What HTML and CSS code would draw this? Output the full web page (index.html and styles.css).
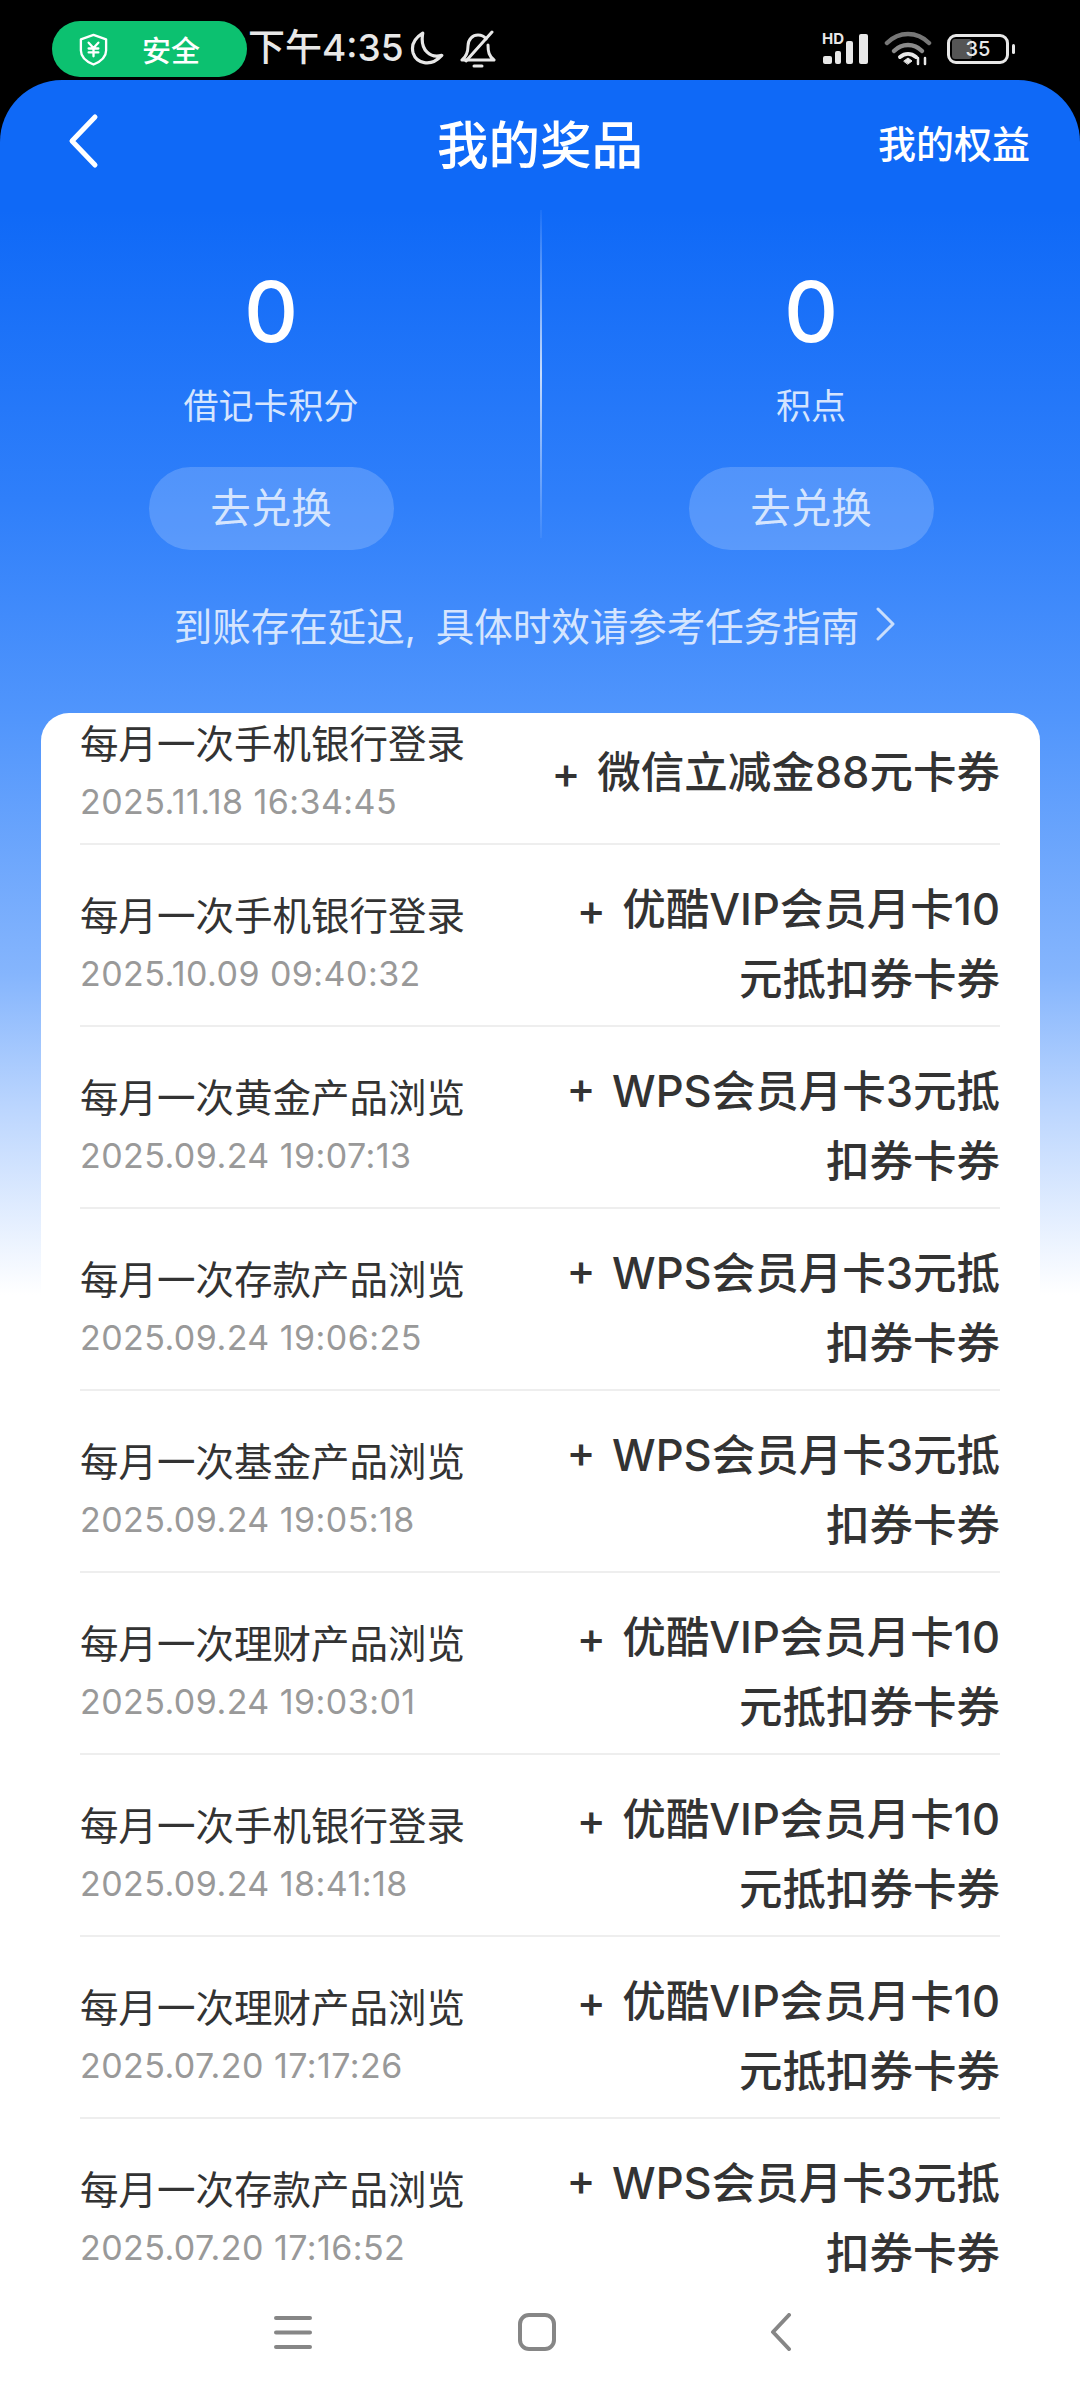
FILE: index.html
```html
<!DOCTYPE html>
<html lang="zh-CN">
<head>
    <meta charset="UTF-8">
    <meta name="viewport" content="width=device-width, initial-scale=1.0">
    <title>我的奖品</title>
    <link rel="stylesheet" href="styles.css">
</head>
<body>

    <!-- Status bar -->
    <div class="status-bar">
        <div class="safe-pill">
            <svg class="shield" viewBox="0 0 30 34" width="31" height="33" fill="none" stroke="#fff" stroke-width="2.4" stroke-linejoin="round" stroke-linecap="round">
                <path d="M15 2 L28 6.5 V18 C28 25 21 30 15 32.5 C9 30 2 25 2 18 V6.5 Z"/>
                <path d="M10 10 L15 15.5 L20 10 M15 15.5 V24 M10 16 H20 M10 20 H20"/>
            </svg>
            <span class="safe-text">安全</span>
        </div>
        <span class="clock">下午4:35</span>
        <svg class="moon" viewBox="3 1 31 34" width="35" height="36" fill="none" stroke="#e8e8e8" stroke-width="3">
            <path d="M14 3 C6 8 3 15 5 22 C8 31 21 36 32 24 C22 27 11 20 14 3 Z" stroke-linejoin="round"/>
        </svg>
        <svg class="bell" viewBox="0 0 36 38" width="36" height="38" fill="none" stroke="#e8e8e8" stroke-width="3" stroke-linecap="round" stroke-linejoin="round">
            <path d="M2 30 C7 26 8 22 8 16 C8 9 13 5 18 5 C21 5 24 6 26 9 M28 15 C28 22 29 26 34 30 H2"/>
            <path d="M32 2 L6 31 M14 36 H22"/>
        </svg>
        <div class="status-right">
            <div class="signal">
                <svg viewBox="0 0 50 34" width="50" height="34">
                    <rect x="1" y="24" width="9" height="8" rx="2" fill="#e8e8e8"/>
                    <rect x="13" y="19" width="6" height="13" rx="2" fill="#e8e8e8"/>
                    <rect x="24" y="9" width="7" height="23" rx="2" fill="#e8e8e8"/>
                    <rect x="37" y="2" width="9" height="30" rx="2" fill="#e8e8e8"/>
                </svg>
                <span class="hd">HD</span>
            </div>
            <svg class="wifi" viewBox="0 0 48 36" width="48" height="36" fill="none" stroke-linecap="round">
                <path d="M3 12 C15 0 33 0 45 12" stroke="#777" stroke-width="4.5"/>
                <path d="M10 20 C18 12 30 12 38 20" stroke="#8a8a8a" stroke-width="4.5"/>
                <path d="M16 26 C21 22 27 22 32 26" stroke="#e8e8e8" stroke-width="4"/>
                <path d="M20 30 L24 27 L28 30 L24 33 Z" fill="#e8e8e8" stroke="#e8e8e8" stroke-width="1"/>
                <path d="M34 33 V27 M41 33 V27" stroke="#e8e8e8" stroke-width="2.5"/>
            </svg>
            <div class="battery">
                <div class="battery-fill"></div>
                <span class="battery-num">35</span>
            </div>
            <div class="battery-tip"></div>
        </div>
    </div>

    <!-- Main page -->
    <div class="page">
        <div class="nav">
            <svg class="back" viewBox="0 0 32 56" width="32" height="56" fill="none" stroke="#fff" stroke-width="5" stroke-linecap="round" stroke-linejoin="round">
                <path d="M27 4 L4 28 L27 52"/>
            </svg>
            <h1>我的奖品</h1>
            <span class="nav-link">我的权益</span>
        </div>

        <div class="points">
            <div class="point-col">
                <div class="point-num">0</div>
                <div class="point-label">借记卡积分</div>
                <div class="exchange">去兑换</div>
            </div>
            <div class="point-line"></div>
            <div class="point-col">
                <div class="point-num">0</div>
                <div class="point-label">积点</div>
                <div class="exchange">去兑换</div>
            </div>
        </div>

        <div class="notice">
            <span>到账存在延迟, 具体时效请参考任务指南</span>
            <svg viewBox="0 0 20 34" width="20" height="34" fill="none" stroke="#c9defc" stroke-width="3" stroke-linecap="round" stroke-linejoin="round">
                <path d="M3 2 L18 17 L3 32"/>
            </svg>
        </div>

        <div class="card">
            <div class="row row-first">
                <div class="row-left"><div class="row-title">每月一次手机银行登录</div><div class="row-date">2025.11.18 16:34:45</div></div>
                <div class="row-prize">+ 微信立减金88元卡券</div>
            </div>
            <div class="row">
                <div class="row-left"><div class="row-title">每月一次手机银行登录</div><div class="row-date">2025.10.09 09:40:32</div></div>
                <div class="row-prize">+ 优酷VIP会员月卡10元抵扣券卡券</div>
            </div>
            <div class="row">
                <div class="row-left"><div class="row-title">每月一次黄金产品浏览</div><div class="row-date">2025.09.24 19:07:13</div></div>
                <div class="row-prize">+ WPS会员月卡3元抵扣券卡券</div>
            </div>
            <div class="row">
                <div class="row-left"><div class="row-title">每月一次存款产品浏览</div><div class="row-date">2025.09.24 19:06:25</div></div>
                <div class="row-prize">+ WPS会员月卡3元抵扣券卡券</div>
            </div>
            <div class="row">
                <div class="row-left"><div class="row-title">每月一次基金产品浏览</div><div class="row-date">2025.09.24 19:05:18</div></div>
                <div class="row-prize">+ WPS会员月卡3元抵扣券卡券</div>
            </div>
            <div class="row">
                <div class="row-left"><div class="row-title">每月一次理财产品浏览</div><div class="row-date">2025.09.24 19:03:01</div></div>
                <div class="row-prize">+ 优酷VIP会员月卡10元抵扣券卡券</div>
            </div>
            <div class="row">
                <div class="row-left"><div class="row-title">每月一次手机银行登录</div><div class="row-date">2025.09.24 18:41:18</div></div>
                <div class="row-prize">+ 优酷VIP会员月卡10元抵扣券卡券</div>
            </div>
            <div class="row">
                <div class="row-left"><div class="row-title">每月一次理财产品浏览</div><div class="row-date">2025.07.20 17:17:26</div></div>
                <div class="row-prize">+ 优酷VIP会员月卡10元抵扣券卡券</div>
            </div>
            <div class="row row-last">
                <div class="row-left"><div class="row-title">每月一次存款产品浏览</div><div class="row-date">2025.07.20 17:16:52</div></div>
                <div class="row-prize">+ WPS会员月卡3元抵扣券卡券</div>
            </div>
        </div>
    </div>

    <!-- Bottom navigation -->
    <div class="bottom-nav">
        <svg viewBox="0 0 38 38" width="38" height="38" fill="none" stroke="#868686" stroke-width="4" stroke-linecap="round">
            <path d="M2 5 H36 M2 19.5 H36 M2 34 H36"/>
        </svg>
        <svg viewBox="0 0 38 38" width="38" height="38" fill="none" stroke="#868686" stroke-width="4">
            <rect x="2" y="2" width="34" height="34" rx="9"/>
        </svg>
        <svg viewBox="0 0 38 38" width="38" height="38" fill="none" stroke="#868686" stroke-width="4" stroke-linecap="round" stroke-linejoin="round">
            <path d="M27 2 L11 19 L27 36"/>
        </svg>
    </div>

</body>
</html>
```

FILE: styles.css
```css
* {
    margin: 0;
    padding: 0;
    box-sizing: border-box;
}

body {
    width: 1080px;
    height: 2400px;
    overflow: hidden;
    background-color: #000;
    font-family: 'Inter', 'Noto Sans CJK SC', sans-serif;
    position: relative;
}

.status-bar {
    height: 80px;
    display: flex;
    align-items: center;
    padding: 18px 0 0 52px;
    color: #e8e8e8;
}

.safe-pill {
    width: 195px;
    height: 56px;
    background-color: #0cc170;
    border-radius: 28px;
    display: flex;
    align-items: center;
    padding-left: 26px;
    color: #fff;
}

.safe-text {
    margin-left: 33px;
    font-size: 29px;
    font-weight: 500;
}

.clock {
    margin-left: 1px;
    font-size: 37px;
    font-weight: 500;
    line-height: 44px;
    margin-top: -2px;
}

.moon {
    margin-left: 6px;
}

.bell {
    margin-left: 15px;
}

.status-right {
    margin-left: auto;
    margin-right: 65px;
    display: flex;
    align-items: center;
}

.signal {
    position: relative;
    width: 50px;
    height: 34px;
}

.hd {
    position: absolute;
    left: 0;
    top: 0;
    font-size: 15px;
    line-height: 14px;
    font-weight: 700;
    color: #e8e8e8;
}

.wifi {
    margin-left: 12px;
}

.battery {
    margin-left: 15px;
    width: 62px;
    height: 30px;
    border: 3px solid #e8e8e8;
    border-radius: 9px;
    position: relative;
    overflow: hidden;
    text-align: center;
}

.battery-fill {
    position: absolute;
    left: 2px;
    top: 2px;
    bottom: 2px;
    width: 20px;
    background-color: #555;
    border-radius: 3px;
}

.battery-num {
    position: relative;
    font-size: 20px;
    line-height: 24px;
    display: block;
    font-weight: 500;
}

.battery-tip {
    width: 3px;
    height: 10px;
    margin-left: 3px;
    background-color: #e8e8e8;
    border-radius: 2px;
}

.page {
    height: 2320px;
    border-radius: 62px 62px 0 0;
    background: linear-gradient(180deg, #0f69f7 0, #0f69f7 130px, #2f7ffa 420px, #5095fc 633px, #85b5fd 894px, #bcd6fe 1030px, #ffffff 1215px);
    padding: 0 40px 0 41px;
}

.nav {
    height: 122px;
    margin: 0 -40px 0 -41px;
    padding: 0 50px 0 68px;
    display: flex;
    align-items: center;
    justify-content: space-between;
    position: relative;
    color: #fff;
}

.nav h1 {
    position: absolute;
    left: 0;
    right: 0;
    text-align: center;
    font-size: 51.5px;
    font-weight: 500;
}

.nav-link {
    font-size: 38px;
    font-weight: 500;
}

.points {
    display: flex;
    height: 328px;
    margin: 8px -40px 0 -41px;
    padding-left: 2px;
}

.point-col {
    flex: 1;
    display: flex;
    flex-direction: column;
    align-items: center;
    padding-top: 57px;
}

.point-num {
    font-size: 84px;
    line-height: 90px;
    font-weight: 500;
    color: #fff;
}

.point-label {
    margin-top: 25px;
    font-size: 35px;
    line-height: 48px;
    color: #d5e5fe;
}

.point-line {
    width: 2px;
    background: linear-gradient(180deg, rgba(255,255,255,0.05), rgba(255,255,255,0.75) 50%, rgba(255,255,255,0.05));
}

.exchange {
    margin-top: 37px;
    width: 245px;
    height: 83px;
    flex-shrink: 0;
    border-radius: 42px;
    background-color: rgba(255, 255, 255, 0.18);
    color: #d5e5fe;
    font-size: 40.5px;
    line-height: 83px;
    text-align: center;
}

.notice {
    height: 175px;
    padding: 0 12px 4px 0;
    display: flex;
    align-items: center;
    justify-content: center;
    gap: 16px;
    color: #d5e5fe;
    font-size: 38.5px;
    word-spacing: 9px;
}

.card {
    background-color: #fff;
    border-radius: 28px 28px 0 0;
    padding: 0 40px 0 39px;
    height: 1687px;
    overflow: hidden;
}

.row {
    display: flex;
    justify-content: space-between;
    align-items: center;
    padding: 29px 0 11px;
    border-bottom: 2px solid #eeeeee;
}

.row-first {
    padding: 4px 0 16px;
}

.row-last {
    border-bottom: none;
}

.row-title {
    font-size: 38.5px;
    line-height: 54px;
    color: #333;
    white-space: nowrap;
}

.row-date {
    margin-top: 6px;
    font-size: 34px;
    line-height: 50px;
    letter-spacing: 0.45px;
    color: #999;
    white-space: nowrap;
}

.row-prize {
    width: 450px;
    text-align: right;
    font-size: 43.5px;
    line-height: 70px;
    font-weight: 500;
    word-spacing: 5px;
    color: #333;
}

.bottom-nav {
    position: absolute;
    left: 0;
    right: 0;
    bottom: 0;
    height: 110px;
    background-color: #fff;
    display: flex;
    align-items: flex-start;
    justify-content: center;
    gap: 206px;
    padding: 23px 7px 0 0;
}
```
